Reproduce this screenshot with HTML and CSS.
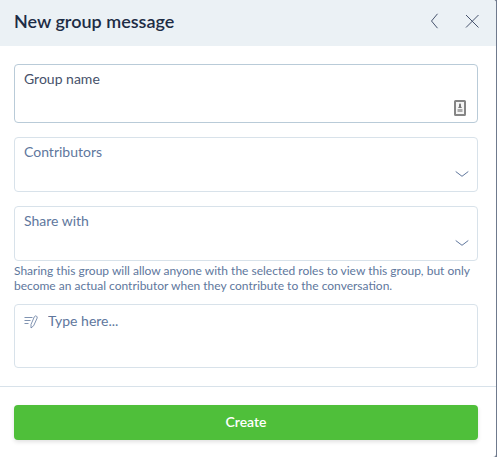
FILE: index.html
```html
<!DOCTYPE html>
<html lang="en">
<head>
<meta charset="utf-8">
<meta name="viewport" content="width=device-width, initial-scale=1">
<title>New group message</title>
<link rel="stylesheet" href="styles.css">
</head>
<body>
<form class="dialog">
  <header class="dialog-header">
    <h1 class="dialog-title">New group message</h1>
    <button class="icon-button" type="button" aria-label="Back">
      <svg width="16" height="16" viewBox="0 0 16 16"><path d="M11.500 .8 5.500 8l6 7.200"/></svg>
    </button>
    <button class="icon-button" type="button" aria-label="Close">
      <svg width="16" height="16" viewBox="0 0 16 16"><path d="M2 2l12.500 12.500M14.500 2L2 14.500"/></svg>
    </button>
  </header>
  <div class="dialog-body">
    <div class="field field-active">
      <label class="field-label" for="name">Group name</label>
      <div class="control control-tall">
        <input class="input" id="name" type="text">
        <svg class="autofill" width="12" height="16" viewBox="0 0 12 16">
          <rect class="autofill-frame" x="1" y="1" width="10" height="14" rx=".5"/>
          <path class="autofill-person" d="M5 4.500 6 3l1 1.500v2L8 8H4l1-1.500z"/>
          <path class="autofill-base" d="M3.500 9h5v3h-5z"/>
        </svg>
      </div>
    </div>
    <div class="field">
      <label class="field-label" for="contributors">Contributors</label>
      <div class="control">
        <select class="input" id="contributors"></select>
        <svg class="chevron" width="14" height="8" viewBox="0 0 14 8"><path d="M.7 1.500 7 6.300l6.300-4.800"/></svg>
      </div>
    </div>
    <div class="field">
      <label class="field-label" for="share">Share with</label>
      <div class="control">
        <select class="input" id="share" aria-describedby="share-help"></select>
        <svg class="chevron" width="14" height="8" viewBox="0 0 14 8"><path d="M.7 1.500 7 6.300l6.300-4.800"/></svg>
      </div>
    </div>
    <p class="help" id="share-help">Sharing this group will allow anyone with the selected roles to view this group, but only become an actual contributor when they contribute to the conversation.</p>
    <div class="field message">
      <svg class="pencil" width="14" height="14" viewBox="0 0 14 14"><path d="M.5 2.500h8M.5 5.500h6M.5 8.500h4M7 9.500l3.300-7.700Q11.200.4 12.400 1.100q1.200.7.700 2L9.700 10.700 7 13z"/></svg>
      <textarea class="input message-input" aria-label="Message" placeholder="Type here..."></textarea>
    </div>
  </div>
  <footer class="dialog-footer">
    <button class="create" type="submit">Create</button>
  </footer>
</form>
</body>
</html>
```
FILE: styles.css
```css
* {
  box-sizing: border-box;
}

body {
  margin: 0;
  background: #6f7a8d;
  color: #60779d;
  font: 14px/18px Lato, "Liberation Sans", sans-serif;
}

.dialog {
  display: flex;
  flex-direction: column;
  min-height: 100vh;
  margin-right: 1px;
  overflow: hidden;
  background: #fff;
  border-radius: 0 3px 3px 0;
}

.dialog-header {
  display: flex;
  align-items: center;
  gap: 14px;
  height: 46px;
  padding: 0 12px 4px 14px;
  background: #ebf1f5;
}

.dialog-title {
  flex: 1;
  margin: 0;
  color: #1d2c45;
  font-size: 18px;
  font-weight: 600;
  line-height: 22px;
}

.icon-button {
  display: flex;
  padding: 4px;
  border: 0;
  background: none;
  color: #46536d;
  cursor: pointer;
}

svg {
  fill: none;
  stroke: currentColor;
}

.dialog-body {
  flex: 1;
  padding: 18px;
  padding-left: 14px;
}

.field {
  margin-bottom: 14px;
  padding: 5px 8px 5px 9px;
  border: 1px solid #d8e2ea;
  border-radius: 4px;
}

.field-active {
  border-color: #b9cbd8;
}

.field-active .field-label {
  color: #46516a;
}

.field-label {
  display: block;
}

.control {
  display: grid;
  align-items: center;
  height: 25px;
}

.control-tall {
  height: 29px;
}

.control > * {
  grid-area: 1 / 1;
}

.input {
  width: 100%;
  height: 100%;
  margin: 0;
  padding: 0;
  border: 0;
  outline: 0;
  background: none;
  color: inherit;
  font: inherit;
  appearance: none;
  resize: none;
}

.chevron,
.autofill {
  justify-self: end;
  pointer-events: none;
}

.autofill {
  margin: 0 3px 1px 0;
  align-self: end;
}

.autofill-frame {
  fill: #f6f6f6;
  stroke: #858585;
  stroke-width: 2;
}

.autofill-person {
  fill: #777;
  stroke: none;
}

.autofill-base {
  fill: #aaa;
  stroke: none;
}

.help {
  margin: -12px 0 11px;
  font-size: 12px;
  line-height: 15px;
}

.message {
  display: flex;
  gap: 10px;
  height: 64px;
  margin-bottom: 0;
  padding-top: 7px;
}

.pencil {
  flex: none;
  margin-top: 3px;
  stroke-width: .8;
}

.message-input {
  flex: 1;
}

.message-input::placeholder {
  color: inherit;
  opacity: 1;
}

.dialog-footer {
  padding: 18px 18px 17px 14px;
  border-top: 1px solid #d8e2ea;
}

.create {
  display: block;
  width: 100%;
  height: 35px;
  padding-bottom: 2px;
  border: 0;
  border-radius: 4px;
  background: #4fbf3a;
  box-shadow: 0 2px 4px rgb(0 0 0 / 12%);
  color: #fff;
  font: inherit;
  font-weight: 600;
  cursor: pointer;
}
```
